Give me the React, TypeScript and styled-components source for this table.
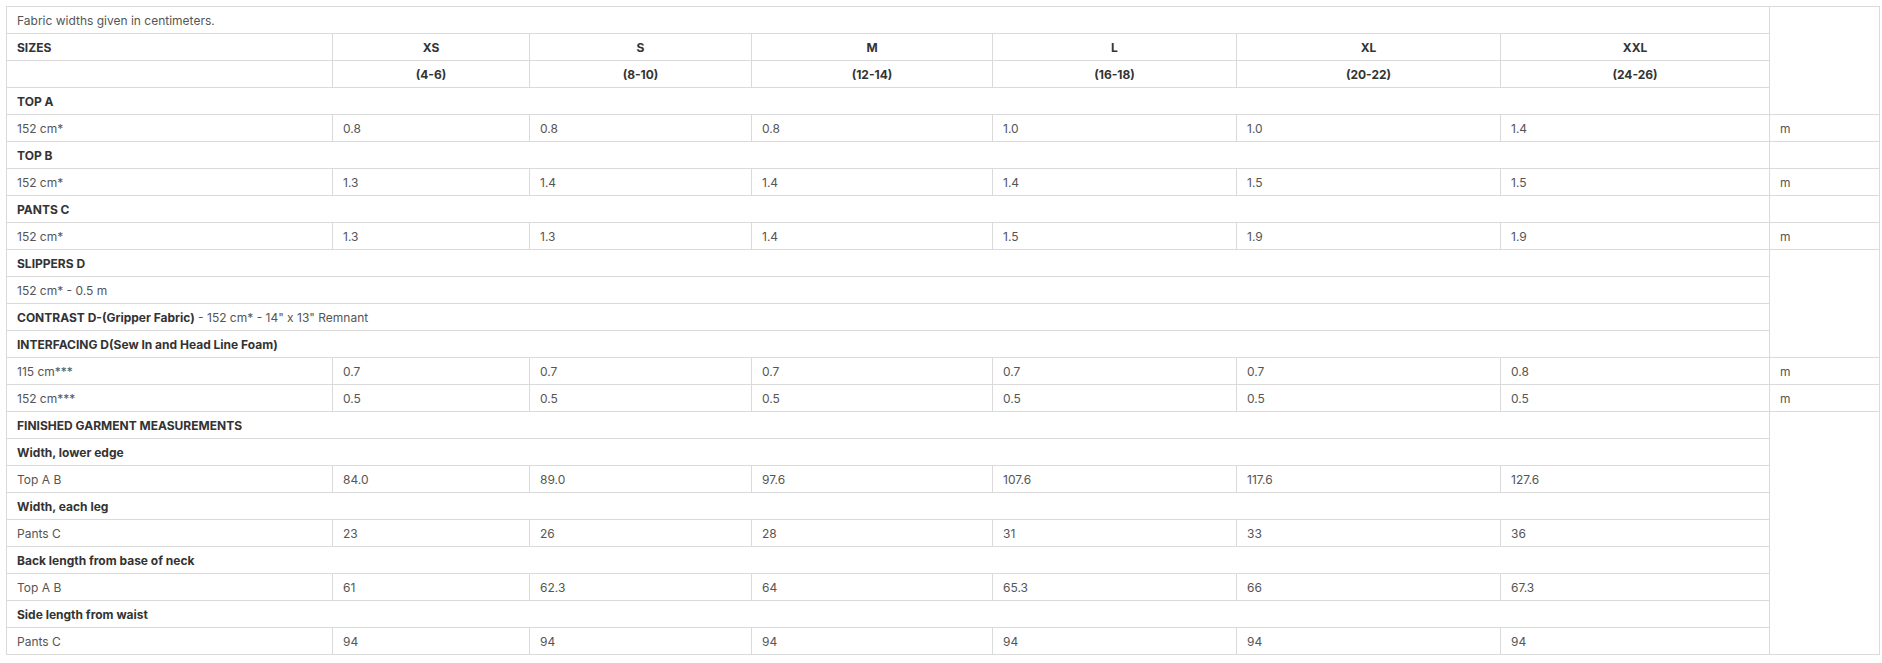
import React from "react";
import styled, { createGlobalStyle } from "styled-components";

const GlobalStyle = createGlobalStyle`
  html, body {
    margin: 0;
    padding: 0;
    background: #ffffff;
  }
  body {
    padding: 6px 0 0 6px;
    font-family: Inter, "Open Sans", "Liberation Sans", sans-serif;
  }
`;

const Table = styled.table`
  width: 1873px;
  border-collapse: collapse;
  table-layout: fixed;
  font-size: 12px;
  color: #555555;
`;

const Cell = styled.td<{ $center?: boolean; $bold?: boolean }>`
  height: 26px;
  padding: 0 10px;
  border: 1px solid #dadada;
  text-align: ${(p) => (p.$center ? "center" : "left")};
  font-weight: ${(p) => (p.$bold ? 700 : 400)};
  color: ${(p) => (p.$bold ? "#333333" : "#555555")};
  vertical-align: middle;
  white-space: nowrap;
`;

const Strong = styled.span`
  font-weight: 700;
  color: #333333;
`;

const colWidths = [326, 197, 222, 241, 244, 264, 269, 110];

type Row =
  | { kind: "note"; text: React.ReactNode; side?: number }
  | { kind: "section"; text: string; side?: number }
  | { kind: "head"; cells: string[] }
  | { kind: "values"; label: string; values: string[]; unit?: boolean };

const rows: Row[] = [
  { kind: "note", text: "Fabric widths given in centimeters.", side: 4 },
  { kind: "head", cells: ["SIZES", "XS", "S", "M", "L", "XL", "XXL"] },
  { kind: "head", cells: ["", "(4-6)", "(8-10)", "(12-14)", "(16-18)", "(20-22)", "(24-26)"] },
  { kind: "section", text: "TOP A" },
  { kind: "values", label: "152 cm*", values: ["0.8", "0.8", "0.8", "1.0", "1.0", "1.4"], unit: true },
  { kind: "section", text: "TOP B", side: 1 },
  { kind: "values", label: "152 cm*", values: ["1.3", "1.4", "1.4", "1.4", "1.5", "1.5"], unit: true },
  { kind: "section", text: "PANTS C", side: 1 },
  { kind: "values", label: "152 cm*", values: ["1.3", "1.3", "1.4", "1.5", "1.9", "1.9"], unit: true },
  { kind: "section", text: "SLIPPERS D", side: 4 },
  { kind: "note", text: "152 cm* - 0.5 m" },
  {
    kind: "note",
    text: (
      <>
        <Strong>CONTRAST D-(Gripper Fabric)</Strong> - 152 cm* - 14" x 13" Remnant
      </>
    ),
  },
  { kind: "section", text: "INTERFACING D(Sew In and Head Line Foam)" },
  { kind: "values", label: "115 cm***", values: ["0.7", "0.7", "0.7", "0.7", "0.7", "0.8"], unit: true },
  { kind: "values", label: "152 cm***", values: ["0.5", "0.5", "0.5", "0.5", "0.5", "0.5"], unit: true },
  { kind: "section", text: "FINISHED GARMENT MEASUREMENTS", side: 9 },
  { kind: "section", text: "Width, lower edge" },
  { kind: "values", label: "Top A B", values: ["84.0", "89.0", "97.6", "107.6", "117.6", "127.6"] },
  { kind: "section", text: "Width, each leg" },
  { kind: "values", label: "Pants C", values: ["23", "26", "28", "31", "33", "36"] },
  { kind: "section", text: "Back length from base of neck" },
  { kind: "values", label: "Top A B", values: ["61", "62.3", "64", "65.3", "66", "67.3"] },
  { kind: "section", text: "Side length from waist" },
  { kind: "values", label: "Pants C", values: ["94", "94", "94", "94", "94", "94"] },
];

function renderRow(row: Row, i: number) {
  switch (row.kind) {
    case "note":
    case "section":
      return (
        <tr key={i}>
          <Cell colSpan={7} $bold={row.kind === "section"}>
            {row.text}
          </Cell>
          {row.side ? <Cell rowSpan={row.side} /> : null}
        </tr>
      );
    case "head":
      return (
        <tr key={i}>
          {row.cells.map((c, j) => (
            <Cell key={j} $bold $center={j > 0}>
              {c}
            </Cell>
          ))}
        </tr>
      );
    case "values":
      return (
        <tr key={i}>
          <Cell>{row.label}</Cell>
          {row.values.map((v, j) => (
            <Cell key={j}>{v}</Cell>
          ))}
          {row.unit ? <Cell>m</Cell> : null}
        </tr>
      );
  }
}

export default function App() {
  return (
    <>
      <GlobalStyle />
      <Table>
        <colgroup>
          {colWidths.map((w, i) => (
            <col key={i} style={{ width: w }} />
          ))}
        </colgroup>
        <tbody>{rows.map(renderRow)}</tbody>
      </Table>
    </>
  );
}
